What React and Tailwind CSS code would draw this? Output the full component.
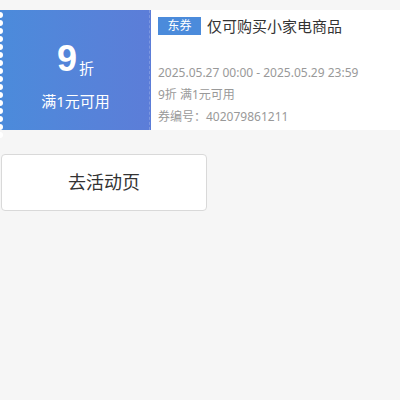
export default function App() {
  const dots = Array.from({ length: 16 });
  return (
    <div
      className="min-h-[400px] w-[400px] bg-[#f6f6f6] pt-[10px]"
      style={{ fontFamily: '"Noto Sans", "Noto Sans CJK SC", sans-serif' }}
    >
      <div className="flex h-[120px] bg-white">
        <div className="relative flex w-[151px] flex-col items-center justify-center bg-gradient-to-r from-[#4b8bdb] to-[#5c7dd8] pt-[10px] text-white">
          <div className="absolute left-[-3px] top-[2px] flex flex-col gap-[2px]">
            {dots.map((_, i) => (
              <span key={i} className="block h-[6px] w-[6px] rounded-full bg-white" />
            ))}
          </div>
          <div className="absolute right-[1px] top-0 h-full border-r border-dashed border-white/20" />
          <div className="flex items-end leading-none">
            <span className="font-['Liberation_Sans'] text-[36px] font-bold leading-none">9</span>
            <span className="mb-[1px] ml-[2px] text-[15px] leading-none">折</span>
          </div>
          <div className="mt-[17px] text-[15px] leading-none">满1元可用</div>
        </div>
        <div className="flex flex-1 flex-col pl-[7px] pt-[7px]">
          <div className="flex items-center">
            <span className="flex h-[18px] w-[43px] items-center justify-center bg-[#4b8bdb] text-[12px] text-white">
              东券
            </span>
            <span className="ml-[6px] text-[15px] leading-none text-[#333]">仅可购买小家电商品</span>
          </div>
          <div className="mt-[32px] text-[12px] leading-none text-[#999]">2025.05.27 00:00 - 2025.05.29 23:59</div>
          <div className="mt-[10px] text-[12px] leading-none text-[#999]">9折 满1元可用</div>
          <div className="mt-[10px] text-[12px] leading-none text-[#999]">券编号：402079861211</div>
        </div>
      </div>
      <button className="ml-[1px] mt-[24px] flex h-[57px] w-[206px] items-center justify-center rounded-[4px] border border-[#d9d9d9] bg-white text-[18px] text-[#333]">
        去活动页
      </button>
    </div>
  );
}
